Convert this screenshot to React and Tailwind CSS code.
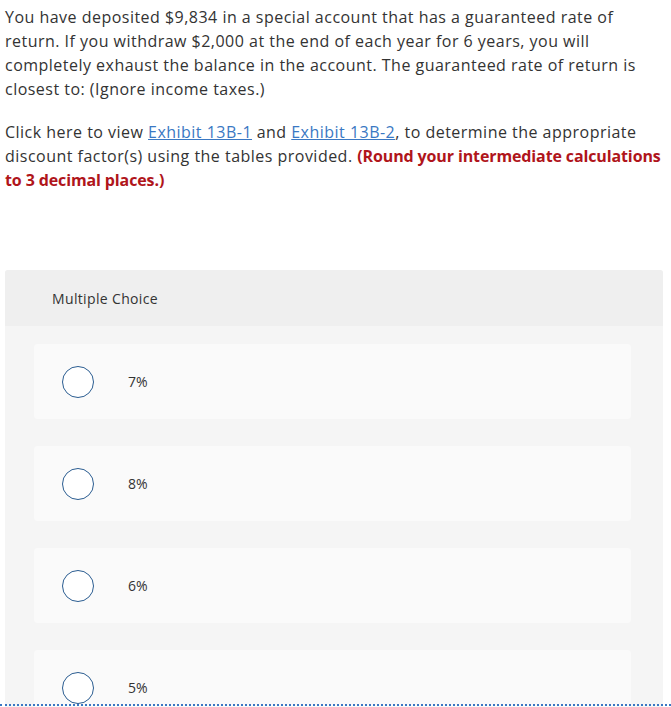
import React from "react";

export default function App() {
  const options = ["7%", "8%", "6%", "5%"];

  return (
    <div
      className="relative h-[707px] overflow-hidden bg-white text-[#333]"
      style={{ fontFamily: '"Open Sans", "Liberation Sans", sans-serif' }}
    >
      <div className="px-[5px] pt-[5px]">
        {/* Question */}
        <p className="text-[16px] leading-[24px] mb-[19px] tracking-[0.48px] whitespace-nowrap">
          You have deposited $9,834 in a special account that has a guaranteed rate of
          <br />
          return. If you withdraw $2,000 at the end of each year for 6 years, you will
          <br />
          completely exhaust the balance in the account. The guaranteed rate of return is
          <br />
          closest to: (Ignore income taxes.)
        </p>
        <p className="text-[16px] leading-[24px] tracking-[0.48px] whitespace-nowrap">
          Click here to view{" "}
          <a href="#" className="text-[#3a78c3] underline">
            Exhibit 13B-1
          </a>{" "}
          and{" "}
          <a href="#" className="text-[#3a78c3] underline">
            Exhibit 13B-2
          </a>
          , to determine the appropriate
          <br />
          discount factor(s) using the tables provided.{" "}
          <strong className="font-bold text-[#b0151b] tracking-[-0.12px]">
            (Round your intermediate calculations
            <br />
            to 3 decimal places.)
          </strong>
        </p>

        {/* Multiple choice box */}
        <div className="mt-[78px] w-[658px] rounded-[3px] bg-[#f5f5f5] overflow-hidden">
          <div className="h-[56px] bg-[#efefef] flex items-center pl-[47px] text-[14px] tracking-[0.35px]">
            Multiple Choice
          </div>
          <div className="pt-[18px] pl-[29px] pr-[32px] flex flex-col gap-[27px] pb-[20px]">
            {options.map((opt) => (
              <div
                key={opt}
                className="h-[75px] rounded-[4px] bg-[#fafafa] flex items-center pl-[28px]"
              >
                <span className="w-[32px] h-[32px] rounded-full border-[1.5px] border-[#2b5d91] bg-white shrink-0" />
                <span className="ml-[34px] text-[14px]">{opt}</span>
              </div>
            ))}
          </div>
        </div>
      </div>

      {/* dotted scroll indicator */}
      <div className="absolute left-0 right-0 top-[704px] border-t-2 border-dotted border-[#3a78c3]" />
    </div>
  );
}
